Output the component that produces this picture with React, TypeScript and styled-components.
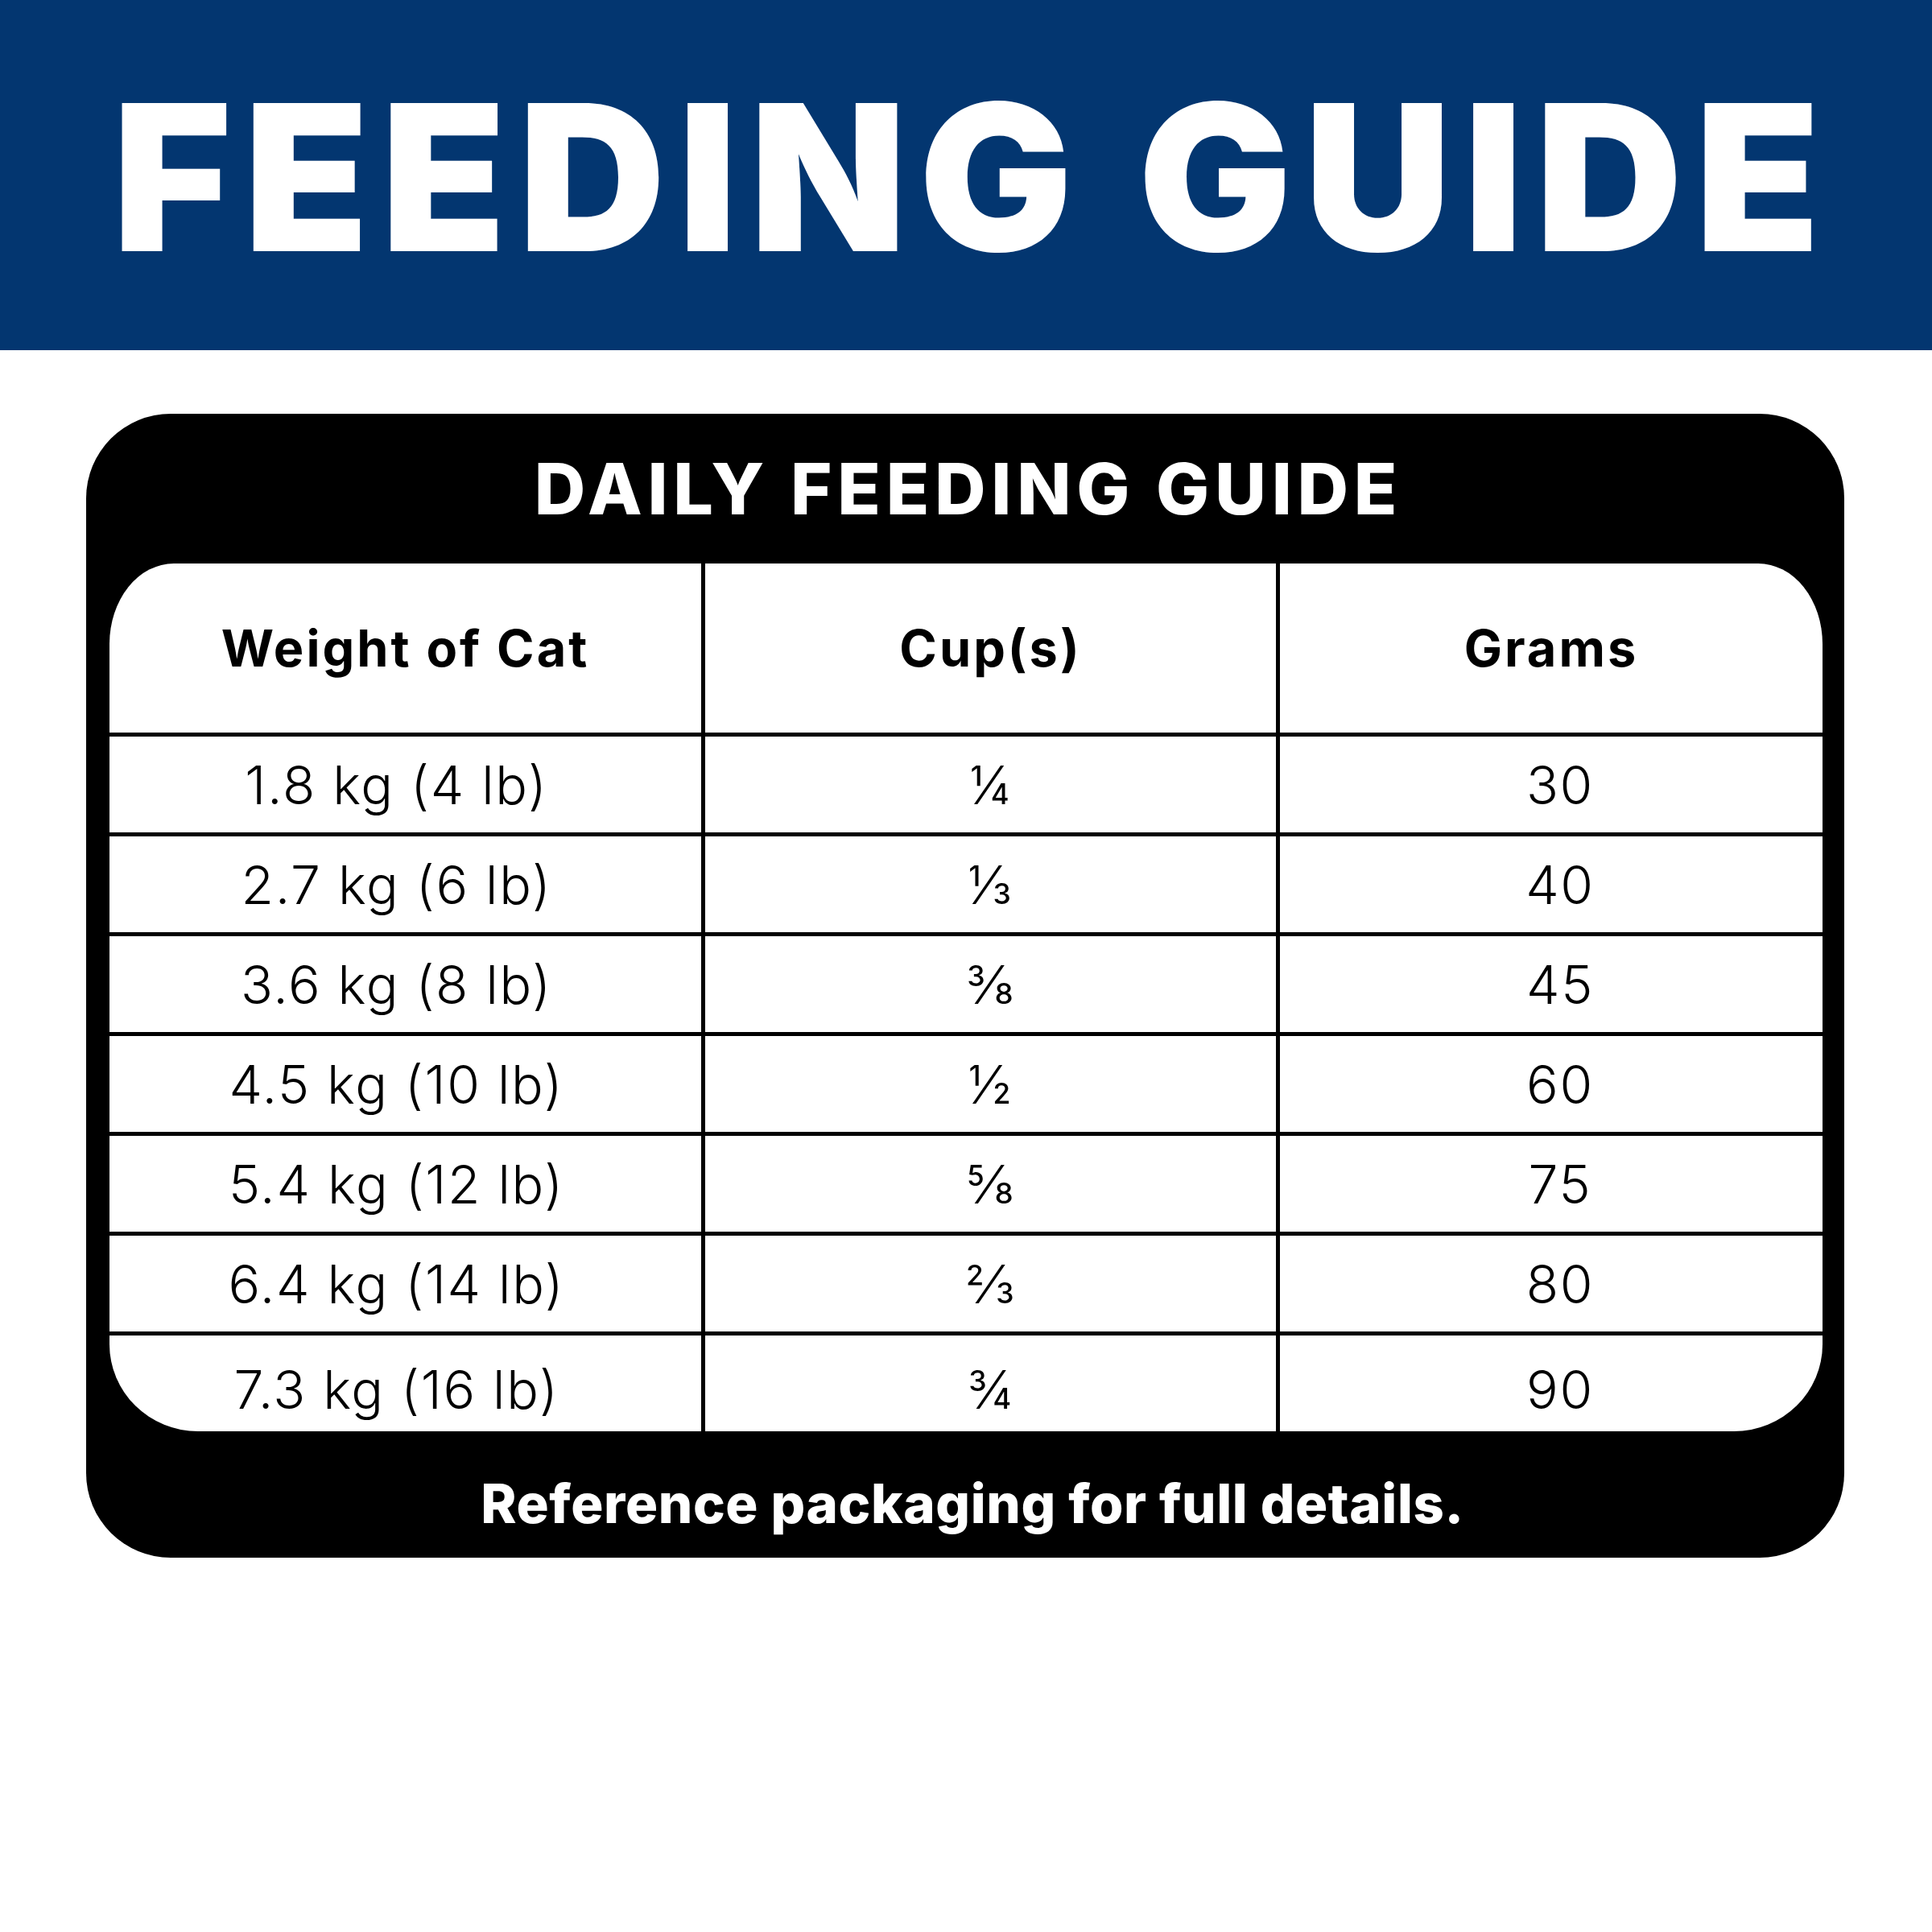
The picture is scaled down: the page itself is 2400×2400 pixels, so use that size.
import React from "react";
import styled, { createGlobalStyle } from "styled-components";

const GlobalStyle = createGlobalStyle`
  html, body {
    margin: 0;
    padding: 0;
    background: #ffffff;
  }
  body {
    width: 2400px;
    height: 2400px;
    font-family: Inter, "Liberation Sans", sans-serif;
  }
`;

const Page = styled.div`
  width: 2400px;
  height: 2400px;
  background: #ffffff;
  display: flex;
  flex-direction: column;
`;

const Banner = styled.header`
  height: 435px;
  background: #033670;
  display: flex;
  align-items: center;
  justify-content: center;
  padding: 5px 0 0 16px;
  box-sizing: border-box;
`;

const Title = styled.h1`
  margin: 0;
  color: #ffffff;
  font-family: Inter, "Liberation Sans", sans-serif;
  font-weight: 900;
  font-size: 253px;
  line-height: 1;
  letter-spacing: 15.5px;
  white-space: nowrap;
`;

const Card = styled.section`
  margin: 79px 0 0 107px;
  width: 2184px;
  height: 1421px;
  background: #000000;
  border-radius: 105px;
  display: flex;
  flex-direction: column;
  padding: 0 27px 0 29px;
  box-sizing: border-box;
`;

const CardTitle = styled.h2`
  margin: 0;
  height: 186px;
  display: flex;
  align-items: center;
  justify-content: center;
  padding-left: 6px;
  color: #ffffff;
  font-weight: 800;
  font-size: 88px;
  line-height: 1;
  letter-spacing: 6.7px;
  white-space: nowrap;
`;

const Table = styled.div`
  background: #ffffff;
  border-radius: 80px 80px 110px 110px / 100px 100px 108px 108px;
  overflow: hidden;
  display: flex;
  flex-direction: column;
`;

const Row = styled.div<{ $height: number; $last?: boolean }>`
  display: grid;
  grid-template-columns: 740px 714px 674px;
  height: ${(p) => p.$height}px;
  border-bottom: ${(p) => (p.$last ? "none" : "5px solid #000")};
  box-sizing: border-box;
`;

const Cell = styled.div<{
  $head?: boolean;
  $divider?: boolean;
  $shift?: number;
  $drop?: number;
}>`
  display: flex;
  align-items: center;
  justify-content: center;
  border-right: ${(p) => (p.$divider ? "5px solid #000" : "none")};
  padding-left: ${(p) => Math.max(p.$shift ?? 0, 0)}px;
  padding-right: ${(p) => Math.max(-(p.$shift ?? 0), 0)}px;
  padding-top: ${(p) => p.$drop ?? 0}px;
  color: #000;
  font-weight: ${(p) => (p.$head ? 700 : 300)};
  font-size: ${(p) => (p.$head ? "63px" : "66px")};
  letter-spacing: ${(p) => (p.$head ? "3px" : "1.7px")};
  line-height: 1;
  white-space: nowrap;
`;

const Footer = styled.p`
  margin: 0;
  flex: 1;
  display: flex;
  align-items: center;
  justify-content: center;
  padding: 22px 0 0 16px;
  color: #ffffff;
  font-weight: 800;
  font-size: 67px;
  letter-spacing: 0.6px;
  line-height: 1;
  white-space: nowrap;
`;

const rows = [
  ["1.8 kg (4 lb)", "¼", "30"],
  ["2.7 kg (6 lb)", "⅓", "40"],
  ["3.6 kg (8 lb)", "⅜", "45"],
  ["4.5 kg (10 lb)", "½", "60"],
  ["5.4 kg (12 lb)", "⅝", "75"],
  ["6.4 kg (14 lb)", "⅔", "80"],
  ["7.3 kg (16 lb)", "¾", "90"],
];

export default function App() {
  return (
    <>
      <GlobalStyle />
      <Page>
        <Banner>
          <Title>FEEDING GUIDE</Title>
        </Banner>
        <Card>
          <CardTitle>DAILY FEEDING GUIDE</CardTitle>
          <Table>
            <Row $height={215}>
              <Cell $head $divider>Weight of Cat</Cell>
              <Cell $head $divider>Cup(s)</Cell>
              <Cell $head>Grams</Cell>
            </Row>
            {rows.map((r, i) => {
              const last = i === rows.length - 1;
              const drop = last ? 14 : 0;
              return (
                <Row key={r[0]} $height={last ? 119 : 124} $last={last}>
                  <Cell $divider $shift={-22} $drop={drop}>{r[0]}</Cell>
                  <Cell $divider $drop={drop}>{r[1]}</Cell>
                  <Cell $shift={22} $drop={drop}>{r[2]}</Cell>
                </Row>
              );
            })}
          </Table>
          <Footer>Reference packaging for full details.</Footer>
        </Card>
      </Page>
    </>
  );
}
